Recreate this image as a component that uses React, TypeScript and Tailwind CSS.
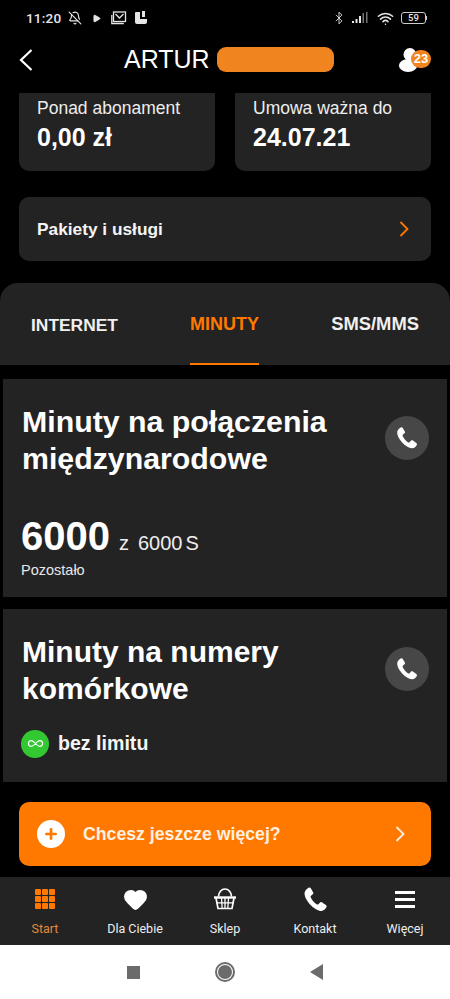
import { Heart, Plus, Bluetooth, Wifi, BellOff, Play, Infinity as InfinityIcon } from "lucide-react";

const FONT = "font-['Liberation_Sans',Arial,sans-serif]";

function PhoneGlyph({ className }: { className: string }) {
  return (
    <svg viewBox="0 0 24 24" className={className} fill="currentColor" aria-hidden="true">
      <path d="M6.2 2.2c.7-.4 1.5-.2 1.900.5l1.900 3.200c.4.600.2 1.400-.3 1.800L8.300 8.800c-.4.300-.5.800-.3 1.300.9 2.200 2.900 4.600 5.200 6 .4.200.9.200 1.200-.2l1.200-1.300c.5-.5 1.300-.6 1.900-.2l3.100 2.200c.6.400.8 1.200.4 1.900-.8 1.400-2.200 3-4.100 3-2.500 0-6.200-1.900-9.600-5.600C4 12.300 2.600 8.500 3 6.300c.3-1.800 1.800-3.300 3.200-4.100z" />
    </svg>
  );
}

function Chevron({ className }: { className: string }) {
  return (
    <svg viewBox="0 0 10 16" className={className} fill="none" stroke="currentColor" strokeWidth="1.800" aria-hidden="true">
      <path d="M1.500 1l7 7-7 7" />
    </svg>
  );
}

function InfoCard({ label, value }: { label: string; value: string }) {
  return (
    <div className="flex-1 h-[78px] rounded-b-[10px] bg-[#232323] px-[18px] pt-[5px]">
      <p className="text-[17.500px] leading-[20px] text-[#eeeeee]">{label}</p>
      <p className="mt-[5px] text-[25px] leading-[28px] font-bold text-white">{value}</p>
    </div>
  );
}

function CallBadge() {
  return (
    <div className="w-11 h-11 shrink-0 rounded-full bg-[#474747] flex items-center justify-center text-white">
      <PhoneGlyph className="w-[26px] h-[26px]" />
    </div>
  );
}

function StatusBar() {
  return (
    <div className="h-[34px] flex items-center justify-between pl-[26px] pr-[23px] pt-[2px] text-[#e6e6e6]">
      <div className="flex items-center gap-[7px]">
        <span className="font-['Roboto',sans-serif] text-[13.500px] font-medium tracking-[0.2px]">11:20</span>
        <BellOff size={14} />
        <Play size={9} fill="currentColor" className="ml-[3px]" />
        <svg viewBox="0 0 16 14" className="w-4 h-[14px] ml-[3px]" fill="none" stroke="currentColor" strokeWidth="1.300" aria-hidden="true">
          <rect x="2.500" y="1" width="12" height="9.500" />
          <path d="M.8 4v8.500h12M4.500 3l4 4 4-4" />
        </svg>
        <svg viewBox="0 0 14 14" className="w-[14px] h-[14px]" fill="currentColor" aria-hidden="true">
          <path d="M2 1h4v7h7v3a2 2 0 0 1-2 2H3a2 2 0 0 1-2-2V2a1 1 0 0 1 1-1zM8 0h3v6H8z" />
        </svg>
      </div>
      <div className="flex items-center gap-[6px]">
        <Bluetooth size={14} strokeWidth={1.500} />
        <svg viewBox="0 0 16 12" className="w-4 h-3" fill="currentColor" aria-hidden="true">
          <rect x="0" y="9" width="2" height="2" />
          <rect x="3.500" y="7" width="2" height="4" />
          <rect x="7" y="4" width="2" height="7" />
          <rect x="10.500" y="1" width="1.500" height="10" opacity=".5" />
          <rect x="14" y="0" width="1.500" height="11" opacity=".5" />
        </svg>
        <Wifi size={17} strokeWidth={2.200} className="ml-[3px]" />
        <div className="ml-[1px] flex items-center">
          <div className="w-[25px] h-[12px] rounded-[3px] border border-[#cccccc] flex items-center justify-center font-['Roboto',sans-serif] text-[9.500px] leading-none font-medium">
            59
          </div>
          <div className="w-[1px] h-[4px] bg-[#cccccc]" />
        </div>
      </div>
    </div>
  );
}

function Header() {
  return (
    <div className="h-[57px] flex items-center pl-[19px] pr-[19px] pb-[6px]">
      <svg viewBox="0 0 14 22" className="w-[14px] h-[22px] text-white" fill="none" stroke="currentColor" strokeWidth="2.200" aria-hidden="true">
        <path d="M12.500 1L2 11l10.500 10" />
      </svg>
      <div className="ml-[91px] flex items-center gap-[7px]">
        <span className="text-[25px] leading-none text-white">ARTUR</span>
        <div className="w-[117px] h-[25px] rounded-[9px] bg-[#f0841f]" />
      </div>
      <div className="relative ml-auto w-[33px] h-[26px]">
        <svg viewBox="0 0 24 28" className="w-[22px] h-[26px] text-white" fill="currentColor" aria-hidden="true">
          <circle cx="13" cy="8" r="7" />
          <ellipse cx="11" cy="20" rx="10" ry="7" />
        </svg>
        <span className="absolute right-0 top-[3px] w-[20px] h-[18px] rounded-full bg-[#f0841f] flex items-center justify-center text-[13px] leading-none font-bold text-white">
          23
        </span>
      </div>
    </div>
  );
}

function NavItem({ label, active, children }: { label: string; active?: boolean; children: React.ReactNode }) {
  return (
    <div className={`flex-1 flex flex-col items-center ${active ? "text-[#ff7900]" : "text-white"}`}>
      <div className="h-[28px] mt-[8px] flex items-center justify-center">{children}</div>
      <span className={`mt-[8px] font-['Roboto',sans-serif] text-[12.500px] leading-[16px] ${active ? "text-[#e08a3c]" : "text-[#eeeeee]"}`}>{label}</span>
    </div>
  );
}

export default function App() {
  return (
    <div className={`${FONT} w-[450px] h-[999px] overflow-hidden bg-black flex flex-col`}>
      <StatusBar />
      <Header />
      <div className="flex gap-5 px-[19px] mt-[2px]">
        <InfoCard label="Ponad abonament" value="0,00 zł" />
        <InfoCard label="Umowa ważna do" value="24.07.21" />
      </div>

      <div className="mx-[19px] mt-[26px] h-[64px] rounded-[10px] bg-[#232323] flex items-center justify-between pl-[18px] pr-[22px]">
        <span className="pt-[2px] text-[17.300px] font-bold text-[#f5f5f5]">Pakiety i usługi</span>
        <Chevron className="w-[10px] h-4 text-[#ff7900]" />
      </div>

      <div className="mt-[22px] h-[82px] rounded-t-[18px] bg-[#232323] flex items-end justify-between px-[31px] font-bold">
        <span className="pb-[27px] text-[17.400px] text-[#f0f0f0]">INTERNET</span>
        <span className="pb-[25px] border-b-2 border-[#ff7900] text-[18px] text-[#ff7900]">MINUTY</span>
        <span className="pb-[27px] text-[18.400px] text-[#f0f0f0]">SMS/MMS</span>
      </div>

      <div className="mx-[3px] mt-[14px] h-[218px] bg-[#232323] pl-[19px] pr-[18px] pt-[24px]">
        <div className="flex items-start justify-between">
          <h2 className="text-[30.300px] leading-[37px] font-bold text-white">
            Minuty na połączenia
            <br />
            międzynarodowe
          </h2>
          <div className="mt-[13px]">
            <CallBadge />
          </div>
        </div>
        <div className="mt-[35px] -ml-[1px] flex items-baseline">
          <span className="text-[40px] leading-[48px] font-bold text-white">6000</span>
          <span className="ml-[9px] text-[20px] text-[#eeeeee]">z</span>
          <span className="ml-[9px] text-[20px] text-[#eeeeee]">6000</span>
          <span className="ml-[3px] text-[20px] text-[#eeeeee]">S</span>
        </div>
        <p className="mt-[1px] -ml-[1px] text-[14.500px] leading-[18px] text-[#e8e8e8]">Pozostało</p>
      </div>

      <div className="mx-[3px] mt-[12px] h-[173px] bg-[#232323] pl-[18px] pr-[18px] pt-[24px]">
        <div className="flex items-start justify-between">
          <h2 className="ml-[1px] text-[30px] leading-[37px] font-bold text-white">
            Minuty na numery
            <br />
            komórkowe
          </h2>
          <div className="mt-[14px]">
            <CallBadge />
          </div>
        </div>
        <div className="mt-[22px] flex items-center gap-[9px]">
          <div className="w-7 h-7 rounded-full bg-[#32c832] flex items-center justify-center text-white">
            <InfinityIcon size={17} strokeWidth={1.600} />
          </div>
          <span className="text-[19.600px] font-bold text-[#f5f5f5]">bez limitu</span>
        </div>
      </div>

      <div className="mx-[19px] mt-[20px] h-[64px] shrink-0 rounded-[10px] bg-[#ff7900] flex items-center pl-[18px] pr-[26px]">
        <div className="w-7 h-7 rounded-full bg-white flex items-center justify-center text-[#ff7900]">
          <Plus size={16} strokeWidth={4} />
        </div>
        <span className="ml-[18px] text-[17.700px] font-bold text-[#fff0e0]">Chcesz jeszcze więcej?</span>
        <Chevron className="ml-auto w-[10px] h-4 text-[#fff0e0]" />
      </div>

      <div className="mt-[11px] h-[68px] shrink-0 bg-[#232323] flex">
        <NavItem label="Start" active>
          <div className="grid grid-cols-3 gap-[1px]">
            {Array.from({ length: 9 }).map((_, i) => (
              <div key={i} className="w-[6px] h-[6px] rounded-[1px] bg-[#ff7900]" />
            ))}
          </div>
        </NavItem>
        <NavItem label="Dla Ciebie">
          <Heart size={25} fill="currentColor" />
        </NavItem>
        <NavItem label="Sklep">
          <svg viewBox="0 0 24 24" className="w-[24px] h-[24px]" fill="none" stroke="currentColor" strokeWidth="1.700" aria-hidden="true">
            <path d="M5.500 9.500a6.500 7.500 0 0 1 13 0" />
            <path d="M1 10.500h22" strokeWidth="2.400" />
            <path d="M3 11l2 10.500h14L21 11" />
            <path d="M3.600 15.800h16.800M8.500 11l.7 10.500M12 11v10.500M15.500 11l-.7 10.500" strokeWidth="1.300" />
          </svg>
        </NavItem>
        <NavItem label="Kontakt">
          <PhoneGlyph className="w-[29px] h-[29px]" />
        </NavItem>
        <NavItem label="Więcej">
          <div className="flex flex-col gap-[4px]">
            <div className="w-5 h-[3px] bg-white" />
            <div className="w-5 h-[3px] bg-white" />
            <div className="w-5 h-[3px] bg-white" />
          </div>
        </NavItem>
      </div>

      <div className="flex-1 bg-white flex items-center justify-center gap-[75px]">
        <div className="w-[13px] h-[13px] bg-[#6b6b6b]" />
        <div className="w-5 h-5 rounded-full border-2 border-[#6b6b6b] flex items-center justify-center">
          <div className="w-[14px] h-[14px] rounded-full bg-[#6b6b6b]" />
        </div>
        <svg viewBox="0 0 14 16" className="w-[14px] h-4 text-[#6b6b6b]" fill="currentColor" aria-hidden="true">
          <path d="M13 0v16L0 8z" />
        </svg>
      </div>
    </div>
  );
}
